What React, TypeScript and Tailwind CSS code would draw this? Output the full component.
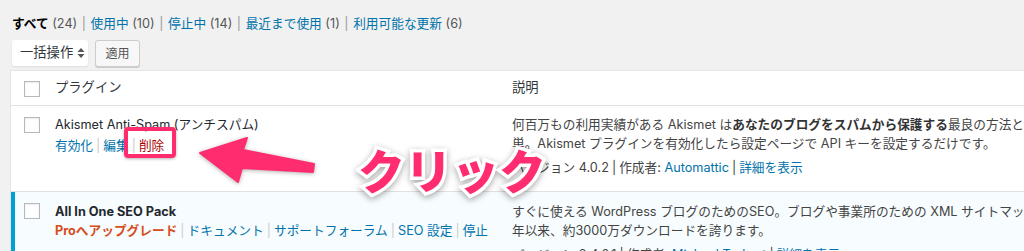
import React from "react";

const Check = () => (
  <span className="block w-[16px] h-[16px] border border-[#b4b9be] bg-white shadow-[inset_0_1px_2px_rgba(0,0,0,0.08)]" />
);

const Sep = ({ dark }: { dark?: boolean }) => (
  <span className={dark ? "inline-block mx-[3px] text-[#444]" : "inline-block mx-[3px] text-[#ccc]"}>|</span>
);

const filters = [
  { label: "使用中", count: 10 },
  { label: "停止中", count: 14 },
  { label: "最近まで使用", count: 1 },
  { label: "利用可能な更新", count: 6 },
];

const App = () => {
  return (
    <div className="relative w-[1024px] h-[251px] overflow-hidden bg-[#f1f1f1] text-[#444] font-['Inter','Noto_Sans_CJK_JP',sans-serif] text-[12.7px]">
      {/* filter links */}
      <div className="pl-[12px] pt-[15px] leading-[18px] whitespace-nowrap">
        <span className="font-bold text-[#000]">すべて</span>
        <span className="text-[#555]"> (24)</span>
        {filters.map((f) => (
          <span key={f.label}>
            <span className="px-[1px] text-[#999]"> | </span>
            <span className="text-[#0073aa]">{f.label}</span>
            <span className="text-[#555]"> ({f.count})</span>
          </span>
        ))}
      </div>

      {/* bulk actions */}
      <div className="flex items-start pl-[12px] mt-[7px] h-[27px]">
        <div className="flex items-center w-[76px] h-[26px] bg-white rounded-[3px] shadow-[0_1px_2px_rgba(0,0,0,0.08)] pl-[8px] text-[13.3px] text-[#32373c]">
          <span>一括操作</span>
          <svg width="8" height="12" viewBox="0 0 8 12" className="ml-[4px]">
            <path d="M4 1 L7.5 5 L0.5 5 Z" fill="#555" />
            <path d="M4 11 L7.5 7 L0.5 7 Z" fill="#555" />
          </svg>
        </div>
        <div className="ml-[7px] w-[45px] h-[27px] flex items-center justify-center bg-[#f7f7f7] border border-[#cccccc] rounded-[3px] shadow-[0_1px_0_#cccccc] text-[12px] text-[#555]">
          適用
        </div>
      </div>

      {/* plugins table */}
      <div className="ml-[10px] mt-[3px] w-[1100px] bg-white border-t border-l border-[#e5e5e5] shadow-[0_1px_1px_rgba(0,0,0,0.04)]">
        <div className="grid grid-cols-[44px_457px_1fr] h-[35px] border-b border-[#e1e1e1] text-[13.3px] text-[#32373c]">
          <div className="pl-[13px] pt-[10px]">
            <Check />
          </div>
          <div className="pt-[7px] leading-[18px]">プラグイン</div>
          <div className="pt-[7px] leading-[18px]">説明</div>
        </div>

        <div className="grid grid-cols-[44px_457px_1fr] h-[86px] border-b border-[#e1e1e1] leading-[19px]">
          <div className="pl-[13px] pt-[11px]">
            <Check />
          </div>
          <div className="pt-[9px]">
            <div className="text-[#23282d]">Akismet Anti-Spam (アンチスパム)</div>
            <div className="mt-[2px] whitespace-nowrap">
              <span className="text-[#0073aa]">有効化</span>
              <Sep />
              <span className="text-[#0073aa]">編集</span>
              <Sep />
              <span className="text-[#a00]">削除</span>
            </div>
          </div>
          <div className="pt-[9px] whitespace-nowrap">
            <div>
              何百万もの利用実績がある Akismet は<b className="text-[#333]">あなたのブログをスパムから保護する</b>最良の方法といえます。簡
            </div>
            <div>単。Akismet プラグインを有効化したら設定ページで API キーを設定するだけです。</div>
            <div className="mt-[5px]">
              バージョン 4.0.2<Sep dark />作成者: <span className="text-[#0073aa]">Automattic</span>
              <Sep dark />
              <span className="text-[#0073aa]">詳細を表示</span>
            </div>
          </div>
        </div>

        <div className="grid grid-cols-[44px_457px_1fr] h-[70px] bg-[#f7fcfe] shadow-[inset_4px_0_0_#00a0d2] leading-[19px]">
          <div className="pl-[13px] pt-[11px]">
            <Check />
          </div>
          <div className="pt-[10px]">
            <div className="font-bold text-[#23282d]">All In One SEO Pack</div>
            <div className="whitespace-nowrap">
              <span className="font-bold text-[#d54e21]">Proへアップグレード</span>
              <Sep />
              <span className="text-[#0073aa]">ドキュメント</span>
              <Sep />
              <span className="text-[#0073aa]">サポートフォーラム</span>
              <Sep />
              <span className="text-[#0073aa]">SEO 設定</span>
              <Sep />
              <span className="text-[#0073aa]">停止</span>
            </div>
          </div>
          <div className="pt-[10px] whitespace-nowrap">
            <div>すぐに使える WordPress ブログのためのSEO。ブログや事業所のための XML サイトマップ対応。2007</div>
            <div>年以来、約3000万ダウンロードを誇ります。</div>
            <div className="mt-[5px]">
              バージョン 2.4.6.1<Sep dark />作成者: <span className="text-[#0073aa]">Michael Torbert</span>
              <Sep dark />
              <span className="text-[#0073aa]">詳細を表示</span>
            </div>
          </div>
        </div>
      </div>

      {/* annotation: highlight box */}
      <div className="absolute left-[124px] top-[127px] w-[52px] h-[31px] border-[4px] border-[#ff2d6f] rounded-[4px] shadow-[0_1px_3px_rgba(0,0,0,0.3)]" />

      {/* annotation: arrow */}
      <svg
        className="absolute left-0 top-0 pointer-events-none drop-shadow-[0_1px_2px_rgba(0,0,0,0.3)]"
        width="1024"
        height="251"
        viewBox="0 0 1024 251"
      >
        <path
          d="M200 153 L247 138 L243 150 L314 164 L313 172 L242 168 L238 182 Z"
          fill="#ff2d6f"
          stroke="#ff2d6f"
          strokeWidth="2"
          strokeLinejoin="round"
        />
      </svg>

      {/* annotation: label */}
      <div className="absolute left-[358px] top-[145px] text-[47px] leading-none font-black text-[#ff2d6f] font-['Noto_Sans_CJK_JP',sans-serif] [-webkit-text-stroke:7px_#fff] [paint-order:stroke_fill] drop-shadow-[0_2px_3px_rgba(0,0,0,0.35)] whitespace-nowrap">
        クリック
      </div>
    </div>
  );
};

export default App;
